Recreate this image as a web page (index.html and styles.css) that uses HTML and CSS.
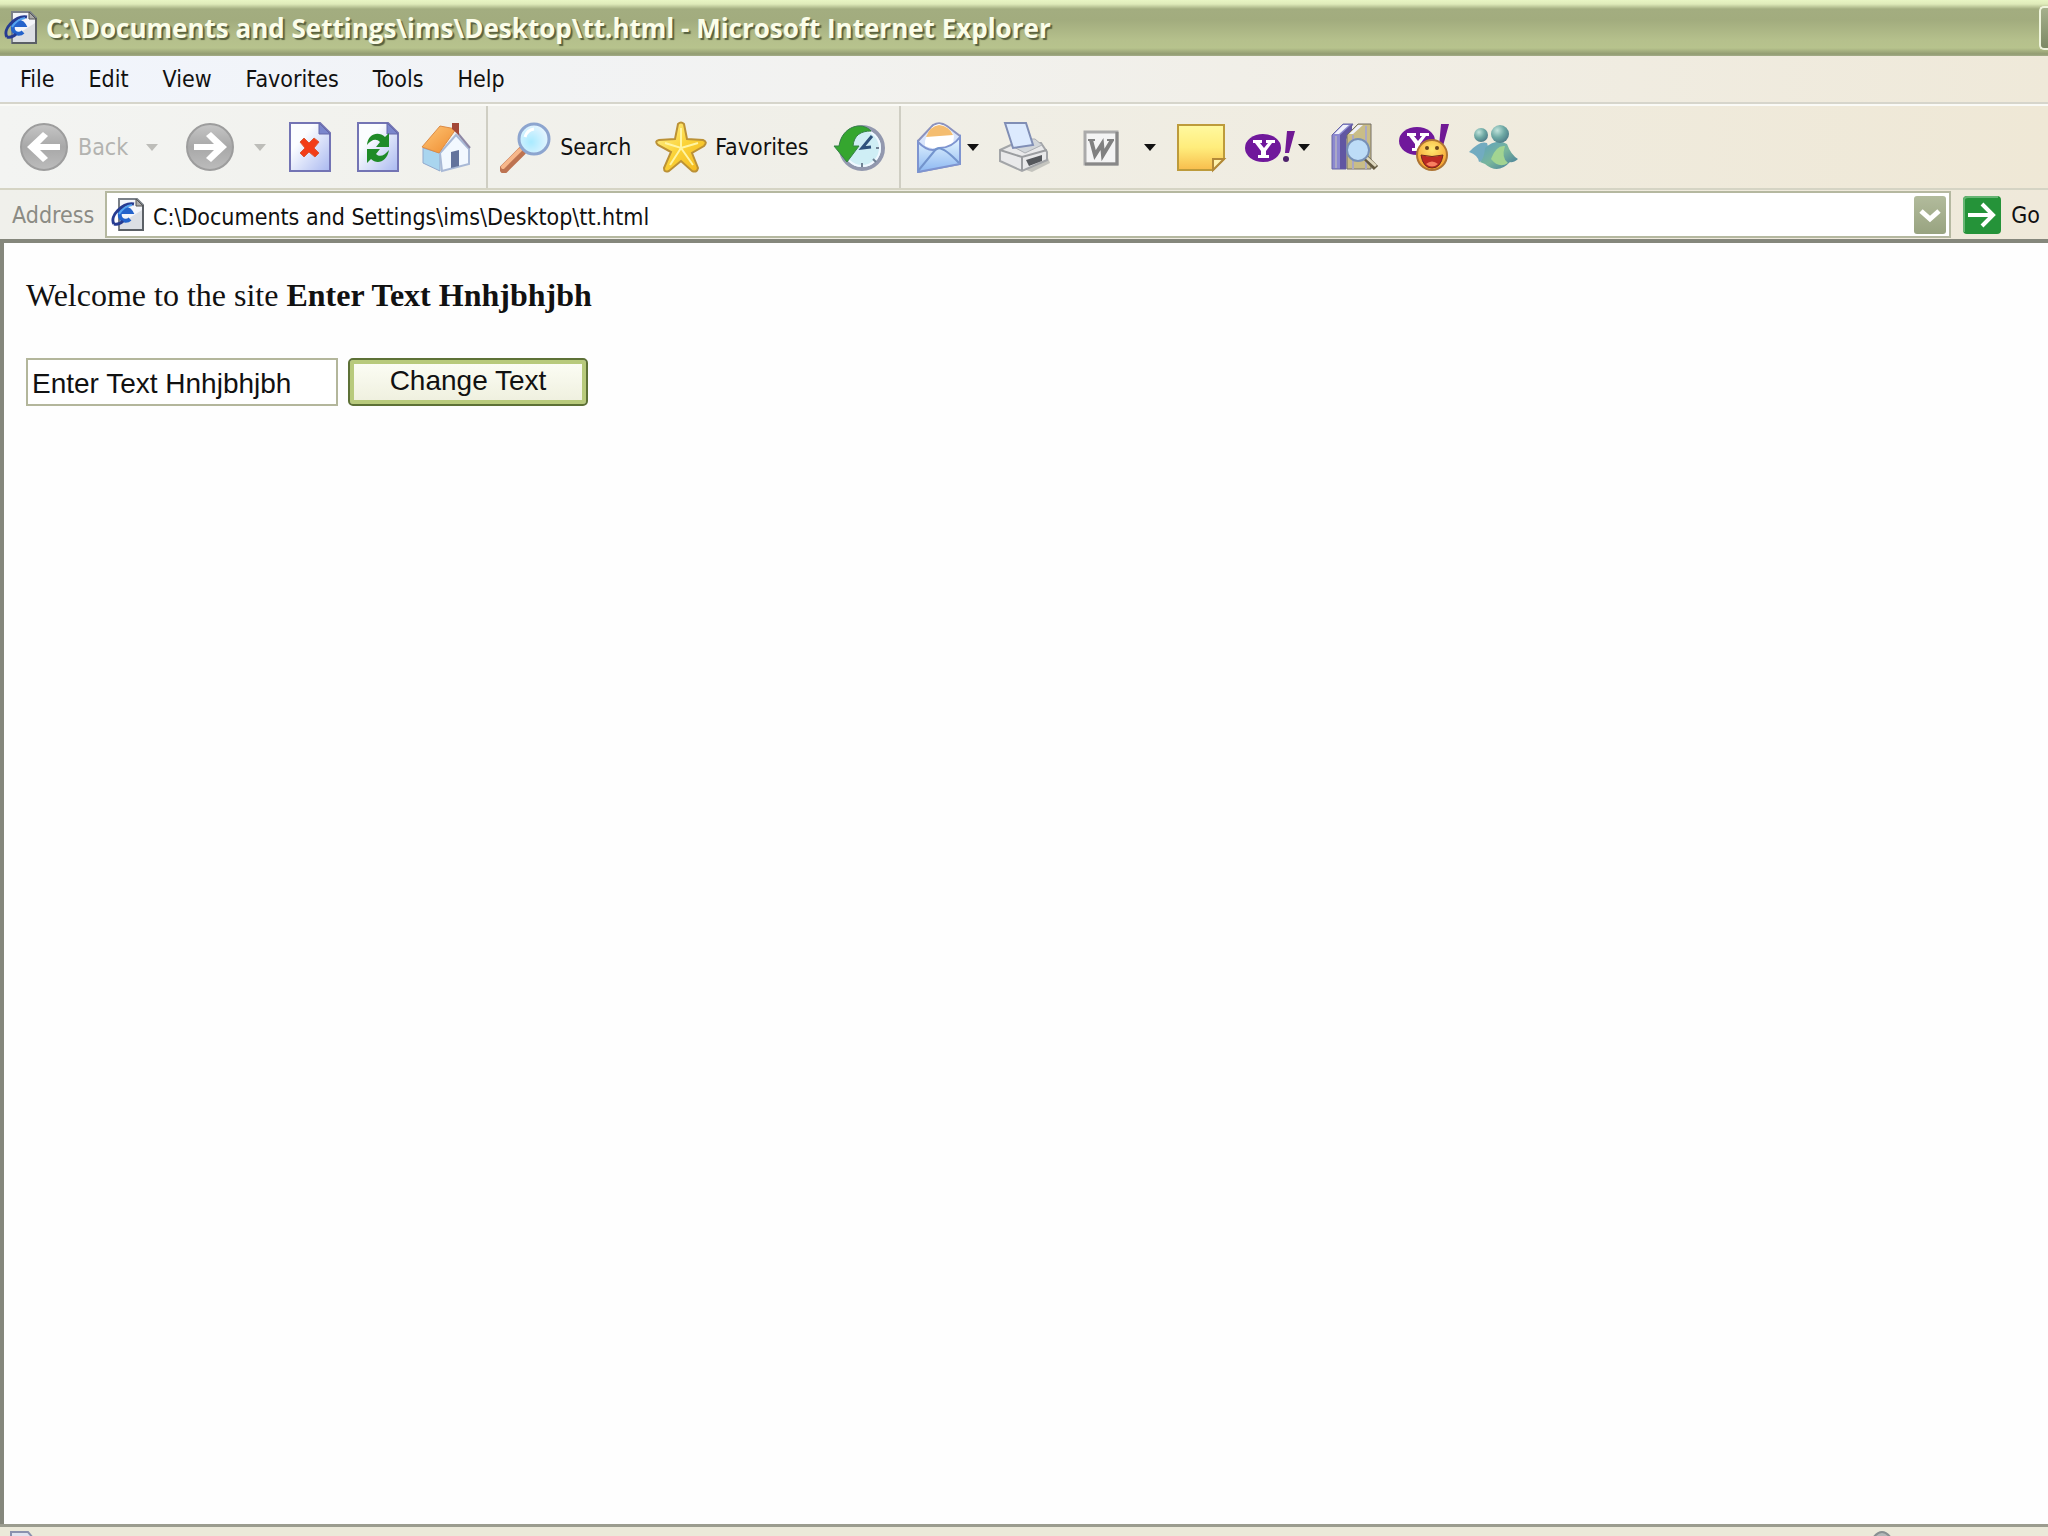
FILE: index.html
```
<!DOCTYPE html>
<html lang="en">
    <head>
        <meta charset="UTF-8" />
        <meta name="viewport" content="width=device-width, initial-scale=1.0" />
        <title>tt.html</title>
        <link rel="stylesheet" href="styles.css">
    </head>
    <body>
        <!-- gradients and shapes used by more than one icon -->
        <svg class="defs" aria-hidden="true">
            <defs>
                <linearGradient id="paper" x1="0" y1="0" x2="1" y2="1">
                    <stop offset="0.3" stop-color="#fbfdff" />
                    <stop offset="1" stop-color="#a9b8f0" />
                </linearGradient>
                <linearGradient id="gray" x1="0" y1="0" x2="0" y2="1">
                    <stop offset="0" stop-color="#c6c6c6" />
                    <stop offset="0.5" stop-color="#a8a8a8" />
                    <stop offset="1" stop-color="#bcbcbc" />
                </linearGradient>
                <linearGradient id="note" x1="0" y1="0" x2="0" y2="1">
                    <stop offset="0" stop-color="#fff9a0" />
                    <stop offset="0.5" stop-color="#ffed7c" />
                    <stop offset="1" stop-color="#f8bd4c" />
                </linearGradient>
                <linearGradient id="gold" x1="0" y1="0" x2="1" y2="1">
                    <stop offset="0" stop-color="#fff49a" />
                    <stop offset="0.5" stop-color="#fbd338" />
                    <stop offset="1" stop-color="#f3b51c" />
                </linearGradient>
                <linearGradient id="mail" x1="0" y1="0" x2="0" y2="1">
                    <stop offset="0" stop-color="#e9f8ff" />
                    <stop offset="1" stop-color="#8db8f2" />
                </linearGradient>
                <linearGradient id="roof" x1="0" y1="0" x2="1" y2="1">
                    <stop offset="0" stop-color="#ffc777" />
                    <stop offset="1" stop-color="#ee8a2e" />
                </linearGradient>
                <radialGradient id="lens" cx="0.4" cy="0.6" r="0.6">
                    <stop offset="0" stop-color="#a8eaff" />
                    <stop offset="1" stop-color="#e6f5ff" />
                </radialGradient>
                <radialGradient id="buddy" cx="0.35" cy="0.3" r="0.8">
                    <stop offset="0" stop-color="#c2e4dc" />
                    <stop offset="0.5" stop-color="#6ea9a4" />
                    <stop offset="1" stop-color="#487484" />
                </radialGradient>
                <linearGradient id="coat" x1="0" y1="0" x2="1" y2="1">
                    <stop offset="0" stop-color="#5c9fc2" />
                    <stop offset="0.5" stop-color="#79b69b" />
                    <stop offset="1" stop-color="#3f739b" />
                </linearGradient>
                <radialGradient id="smile" cx="0.5" cy="0.3" r="0.7">
                    <stop offset="0" stop-color="#ffe870" />
                    <stop offset="1" stop-color="#f59a2a" />
                </radialGradient>
            </defs>
            <symbol id="ie-page" viewBox="0 0 34 34">
                <path d="M8 1H26L32 7V32H8Z" fill="#f3f5fa" stroke="#7a8088" stroke-width="2" />
                <path d="M9 26L31 12V31H9Z" fill="#dcdfe4" />
                <path d="M32 7V32H8" fill="none" stroke="#5b6066" stroke-width="2" />
                <path d="M25 1V8H32Z" fill="#aaa" stroke="#555" />
                <path d="M19 21A6 6 0 1 1 20 14H8" fill="none" stroke="#2463cb" stroke-width="4" />
                <path d="M3 26C-2 18 12 4 23 6M3 26C7 27 10 25 12 23" fill="none" stroke="#263b91" stroke-width="3" />
                <path d="M8 16Q13 8 21 7" fill="none" stroke="#55a4ef" stroke-width="2" />
            </symbol>
            <symbol id="page" viewBox="0 0 52 52">
                <path d="M6 2H36L46 12V50H6Z" fill="url(#paper)" stroke="#7374b4" stroke-width="2" />
                <path d="M35 2V13H46Z" fill="#7b86cc" stroke="#6469aa" />
            </symbol>
            <symbol id="yahoo" viewBox="0 0 52 36">
                <ellipse cx="19" cy="20" rx="18" ry="14" fill="#70189b" />
                <path d="M9 12H18V15H16L20 20L24 15H22V12H31V15H28L22 23V27H25V30H14V27H17V23L11 15H9Z" fill="#fff" />
                <path d="M43 3H51L45 25H41Z" fill="#701994" />
                <circle cx="42" cy="31" r="3" fill="#4e216b" />
            </symbol>
        </svg>

        <header>
            <div class="title-bar">
                <svg class="page-icon" aria-hidden="true"><use href="#ie-page" /></svg>
                <h1>C:\Documents and Settings\ims\Desktop\tt.html - Microsoft Internet Explorer</h1>
                <button class="minimize" aria-label="Minimize"></button>
            </div>

            <nav class="menu-bar">
                <button>File</button>
                <button>Edit</button>
                <button>View</button>
                <button>Favorites</button>
                <button>Tools</button>
                <button>Help</button>
            </nav>

            <div class="toolbar">
                <div class="group nav-group">
                    <button class="tool" disabled>
                        <svg viewBox="0 0 52 52" aria-hidden="true">
                            <circle cx="26" cy="26" r="23" fill="url(#gray)" stroke="#9d9d9d" stroke-width="2" />
                            <path d="M9 26L25 11L30 15L22 23H42V29H22L30 37L25 41Z" fill="#fff" />
                        </svg>
                        Back
                    </button>
                    <button class="arrow" aria-label="Back list" disabled></button>
                    <button class="tool forward" aria-label="Forward" disabled>
                        <svg viewBox="0 0 52 52" aria-hidden="true">
                            <circle cx="26" cy="26" r="23" fill="url(#gray)" stroke="#9d9d9d" stroke-width="2" />
                            <path d="M43 26L27 11L22 15L30 23H10V29H30L22 37L27 41Z" fill="#fff" />
                        </svg>
                    </button>
                    <button class="arrow" aria-label="Forward list" disabled></button>
                </div>

                <div class="group">
                    <button class="tool" aria-label="Stop">
                        <svg viewBox="0 0 52 52" aria-hidden="true">
                            <use href="#page" />
                            <path d="M16 21L20 17L25 22L30 17L35 21L30 27L35 32L31 36L25 31L20 36L16 32L21 27Z" fill="#f33d17" stroke="#d95b38" />
                        </svg>
                    </button>
                    <button class="tool" aria-label="Refresh">
                        <svg viewBox="0 0 52 52" aria-hidden="true">
                            <use href="#page" />
                            <path d="M15 24C16 12 27 10 33 16L37 12V26H24L28 21C24 17 19 19 15 24Z" fill="#1f8b28" />
                            <path d="M37 29C35 41 25 44 19 38L15 42V28H28L24 33C28 37 33 34 37 29Z" fill="#1f8b28" />
                        </svg>
                    </button>
                    <button class="tool" aria-label="Home">
                        <svg viewBox="0 0 52 52" aria-hidden="true">
                            <path d="M3 27L20 32V50L3 42Z" fill="#a9d5ef" stroke="#91a9cd" />
                            <path d="M20 32L36 14L49 28V43L22 50Z" fill="#f2f8ff" stroke="#a9b9d6" stroke-width="2" />
                            <path d="M2 26L20 5L36 8L19 32Z" fill="url(#roof)" stroke="#dc8b45" />
                            <path d="M36 10L50 27" stroke="#8d87a5" stroke-width="2" />
                            <path d="M32 2H39V14L32 8Z" fill="#a34737" />
                            <path d="M31 31L39 29V45L31 47Z" fill="#63739c" />
                        </svg>
                    </button>
                </div>

                <div class="group search-group">
                    <button class="tool">
                        <svg viewBox="0 0 52 52" aria-hidden="true">
                            <path d="M4 48L22 30" stroke="#bd7351" stroke-width="9" stroke-linecap="round" />
                            <path d="M3 46L20 29" stroke="#f7b78b" stroke-width="4" stroke-linecap="round" />
                            <circle cx="34" cy="18" r="15" fill="url(#lens)" stroke="#8da5cf" stroke-width="3" />
                            <path d="M25 16Q27 9 34 8" fill="none" stroke="#fff" stroke-width="3" />
                        </svg>
                        Search
                    </button>
                    <button class="tool">
                        <svg viewBox="0 0 52 52" aria-hidden="true">
                            <path d="M23 3Q26 0 29 3L32 18L48 19Q53 21 49 25L37 32L43 47Q42 52 37 50L26 40L14 50Q9 52 9 47L16 31L3 24Q-1 20 4 19L20 18Z" fill="url(#gold)" stroke="#bb9136" stroke-width="2" />
                            <path d="M26 7V27L10 22M26 27L15 44M26 27L38 44M26 27L43 22" fill="none" stroke="#fff5a3" stroke-width="2" />
                        </svg>
                        Favorites
                    </button>
                    <button class="tool" aria-label="History">
                        <svg viewBox="0 0 52 52" aria-hidden="true">
                            <circle cx="29" cy="27" r="21" fill="#cfeef5" stroke="#9298ae" stroke-width="4" />
                            <circle cx="29" cy="27" r="18" fill="none" stroke="#f0f8ff" stroke-width="2" />
                            <path d="M29 42V46M43 27H46M40 38L43 41" stroke="#718294" stroke-width="2" />
                            <path d="M6 25C9 5 29 0 38 10C28 10 21 14 20 25H26L14 41L1 25Z" fill="#35a62f" stroke="#358047" />
                            <path d="M39 15L29 27L38 26" fill="none" stroke="#2e527c" stroke-width="3" />
                        </svg>
                    </button>
                </div>

                <div class="group extras">
                    <div class="split">
                        <button class="tool" aria-label="Mail">
                            <svg viewBox="0 0 52 52" aria-hidden="true">
                                <path d="M5 20L20 4Q27 0 34 5L47 15V43L5 51Z" fill="#d9e5fb" stroke="#8b92bd" stroke-width="2" />
                                <path d="M12 20Q16 5 26 3Q36 5 41 15L40 23Q27 31 12 25Z" fill="#fff" />
                                <path d="M13 16Q17 5 26 4Q36 5 40 14Z" fill="#f4bd70" />
                                <path d="M5 21Q17 33 26 27Q39 27 47 16V43L5 51Z" fill="url(#mail)" stroke="#7e94d0" stroke-width="2" />
                                <path d="M5 50L23 28Q29 24 46 42" fill="none" stroke="#7394cd" stroke-width="2" />
                            </svg>
                        </button>
                        <button class="arrow" aria-label="Mail menu"></button>
                    </div>
                    <button class="tool" aria-label="Print">
                        <svg viewBox="0 0 52 52" aria-hidden="true">
                            <path d="M25 48L50 37L52 42L34 51Z" fill="#c4c4be" />
                            <path d="M2 29L17 22L43 22L49 31V39L24 50L2 40Z" fill="#e9e9ea" stroke="#a3a5a8" stroke-width="2" />
                            <path d="M2 29L24 36L49 29M24 36V49" fill="none" stroke="#9b9da0" stroke-width="2" />
                            <path d="M12 24L18 18H37L44 24L27 32Z" fill="#d2d6da" stroke="#acafb4" />
                            <path d="M7 2H28L35 24L15 27Z" fill="#dceafe" stroke="#808eb5" stroke-width="2" />
                            <path d="M28 39L44 34V40L31 45Z" fill="#55585c" />
                        </svg>
                    </button>
                    <div class="split word">
                        <button class="tool" aria-label="Edit with Word">
                            <svg viewBox="0 0 52 52" aria-hidden="true">
                                <rect x="10" y="11" width="32" height="32" fill="#f4f4f4" stroke="#aaa" stroke-width="3" />
                                <path d="M10 43H42V11" fill="none" stroke="#888" stroke-width="3" />
                                <path d="M16 19L20 34L27 23L28 34L37 19" fill="none" stroke="#808080" stroke-width="4" />
                                <path d="M13 19H20M32 19H39" stroke="#808080" stroke-width="2" />
                            </svg>
                        </button>
                        <button class="arrow" aria-label="Edit menu"></button>
                    </div>
                    <button class="tool" aria-label="Discuss">
                        <svg viewBox="0 0 52 52" aria-hidden="true">
                            <path d="M3 4H49V38L38 49H3Z" fill="url(#note)" stroke="#bd9b3b" stroke-width="2" />
                            <path d="M38 49V38H49Z" fill="#fff3ad" stroke="#b28938" stroke-width="2" />
                        </svg>
                    </button>
                    <div class="split">
                        <button class="tool" aria-label="Yahoo">
                            <svg viewBox="0 0 52 52" aria-hidden="true"><use href="#yahoo" y="7" width="52" height="36" /></svg>
                        </button>
                        <button class="arrow" aria-label="Yahoo menu"></button>
                    </div>
                    <button class="tool" aria-label="Research">
                        <svg viewBox="0 0 52 52" aria-hidden="true">
                            <path d="M3 14L14 3H24L17 14V48H3Z" fill="#8c89d0" stroke="#6766a5" />
                            <path d="M11 14L23 3V12L17 18V48H11Z" fill="#6156a2" />
                            <path d="M18 14L29 3H42V48H18Z" fill="#c9bd87" stroke="#746f67" />
                            <path d="M5 13L14 4H20L10 13ZM20 13L29 4H34L24 13Z" fill="#eff1fb" />
                            <path d="M7 15V47M24 14V48M37 5V48" stroke="#aaa8c5" stroke-width="2" />
                            <path d="M36 36L47 47" stroke="#635940" stroke-width="6" />
                            <path d="M37 36L47 45" stroke="#ded8c0" stroke-width="3" />
                            <circle cx="29" cy="29" r="11" fill="#bddcf7" stroke="#7890b5" stroke-width="2" />
                        </svg>
                    </button>
                    <button class="tool" aria-label="Yahoo Messenger">
                        <svg viewBox="0 0 52 52" aria-hidden="true">
                            <use href="#yahoo" width="52" height="36" />
                            <circle cx="34" cy="34" r="15" fill="url(#smile)" stroke="#ae7534" stroke-width="2" />
                            <circle cx="29" cy="27" r="2" fill="#6b461c" />
                            <circle cx="39" cy="27" r="2" fill="#6b461c" />
                            <path d="M23 34Q34 37 45 34Q43 47 34 47Q25 47 23 34Z" fill="#bc2922" stroke="#732a1b" />
                            <path d="M28 43Q34 38 40 43Q34 48 28 43Z" fill="#f98060" />
                        </svg>
                    </button>
                    <button class="tool" aria-label="Messenger">
                        <svg viewBox="0 0 52 52" aria-hidden="true">
                            <path d="M2 31Q13 19 20 22L24 36L12 41Q11 34 2 31Z" fill="#72abc0" />
                            <circle cx="14" cy="14" r="7" fill="url(#buddy)" />
                            <path d="M13 41Q17 38 18 27Q29 17 40 23Q44 34 51 38Q46 42 43 41Q31 54 18 43Z" fill="url(#coat)" />
                            <path d="M24 38Q29 24 38 25Q34 37 41 42Q32 48 24 38Z" fill="#a2d491" />
                            <circle cx="33" cy="13" r="9" fill="url(#buddy)" />
                        </svg>
                    </button>
                </div>
            </div>

            <form class="address-bar">
                <label for="address">Address</label>
                <div class="address-field">
                    <svg class="page-icon" aria-hidden="true"><use href="#ie-page" /></svg>
                    <input id="address" type="text" value="C:\Documents and Settings\ims\Desktop\tt.html" />
                    <button class="drop" type="button" aria-label="Show addresses">
                        <svg viewBox="0 0 32 38" aria-hidden="true">
                            <path d="M7 15L16 23L25 15" fill="none" stroke="#fff" stroke-width="5" />
                        </svg>
                    </button>
                </div>
                <button class="go" type="button">
                    <svg viewBox="0 0 38 38" aria-hidden="true">
                        <rect width="38" height="38" rx="4" fill="#259339" />
                        <path d="M1 36V4Q1 1 5 1H35" fill="none" stroke="#67b574" stroke-width="2" />
                        <path d="M5 19H30M19 8L30 19L19 30" fill="none" stroke="#fff" stroke-width="4" />
                    </svg>
                    Go
                </button>
            </form>
        </header>

        <main>
            <p>Welcome to the site <b id="boldStuff">Enter Text Hnhjbhjbh</b></p>
            <form class="change-form">
                <input id="userInput" type="text" value="Enter Text Hnhjbhjbh" aria-label="Enter Text" />
                <button id="changeBtn" type="button">Change Text</button>
            </form>
        </main>

        <footer>
            <svg viewBox="0 0 24 8" aria-hidden="true">
                <path d="M1 8V2H18L23 8" fill="#dfe3ef" stroke="#8a91ae" stroke-width="2" />
            </svg>
            <svg viewBox="0 0 24 8" aria-hidden="true">
                <path d="M3 8Q12 -4 21 8" fill="#b3b8b8" stroke="#888f91" stroke-width="2" />
            </svg>
        </footer>

        <script>
            const input = document.getElementById('userInput');
            const bold = document.getElementById('boldStuff');

            document.getElementById('changeBtn').addEventListener('click', () => {
                bold.textContent = input.value;
            });
        </script>
    </body>
</html>
```
FILE: styles.css
```
* {
    margin: 0;
    padding: 0;
    box-sizing: border-box;
}
body {
    display: flex;
    flex-direction: column;
    min-height: 100vh;
    overflow: hidden;
    background: #fefefe;
    font-family: 'DejaVu Sans Condensed', 'Noto Sans', sans-serif;
    font-size: 23px;
    color: #111;
}
button {
    font: inherit;
    color: inherit;
    background: none;
    border: none;
}
svg {
    display: block;
    flex: none;
}
.defs {
    position: absolute;
    width: 0;
    height: 0;
}
.page-icon {
    width: 34px;
    height: 34px;
}

/* title bar */
.title-bar {
    display: flex;
    align-items: center;
    gap: 8px;
    height: 56px;
    padding-left: 4px;
    background: linear-gradient(
        #e8f5c4 0,
        #dfebba 4px,
        #a3ad80 9px,
        #a2ac7e 20px,
        #b5c08c 40px,
        #b7c38d 48px,
        #929c72 54px,
        #a4ac88 100%
    );
}
.title-bar h1 {
    flex: 1;
    font-family: 'Open Sans', sans-serif;
    font-size: 26px;
    font-weight: 700;
    white-space: nowrap;
    color: #fbfde9;
    text-shadow: 2px 2px 1px #59613e;
}
.minimize {
    width: 9px;
    height: 44px;
    background: linear-gradient(#a5b08c, #7d8964);
    border: 2px solid #eff5dc;
    border-right: none;
    border-radius: 5px 0 0 5px;
}

/* menu */
.menu-bar {
    display: flex;
    gap: 34px;
    height: 48px;
    padding: 0 20px;
    background: linear-gradient(90deg, #f1f5fd, #f2f2f0 40%, #efe9d9);
    border-bottom: 2px solid #d6d5cb;
}

/* icons */
.toolbar {
    display: flex;
    height: 86px;
    background: linear-gradient(90deg, #f3f4f2, #f0efe8 40%, #efe8d6);
    border-top: 2px solid #fafaf6;
    border-bottom: 2px solid #d5d4c4;
}
.group {
    display: flex;
    align-items: center;
    gap: 16px;
}
.nav-group {
    padding: 0 16px 0 18px;
}
.search-group,
.extras {
    margin-left: 14px;
    padding-left: 12px;
    border-left: 2px solid #cfcec3;
}
.search-group {
    gap: 24px;
}
.extras {
    gap: 17px;
}
.tool {
    display: flex;
    align-items: center;
    gap: 8px;
}
.tool svg {
    width: 52px;
    height: 52px;
}
.tool:disabled {
    color: #b3b3b0;
}
.forward {
    margin-left: 8px;
}
.arrow {
    display: flex;
    justify-content: center;
    width: 16px;
}
.arrow::after {
    content: '';
    border: 6px solid transparent;
    border-top: 7px solid #111;
    border-bottom: none;
}
.arrow:disabled::after {
    border-top-color: #bdbdb9;
}
.split {
    display: flex;
    align-items: center;
}
.word {
    gap: 15px;
    margin-left: 8px;
}

/* address */
.address-bar {
    display: flex;
    align-items: center;
    height: 53px;
    padding: 0 8px 0 12px;
    background: linear-gradient(90deg, #f0f0eb, #efe9da);
    border-bottom: 4px solid #85877c;
}
.address-bar label {
    width: 93px;
    color: #8b8b84;
}
.address-field {
    display: flex;
    flex: 1;
    align-items: center;
    height: 47px;
    padding: 0 3px 0 4px;
    background: #fff;
    border: 2px solid #b5b8a0;
}
.address-field input {
    flex: 1;
    min-width: 0;
    padding: 4px 0 0 8px;
    font: inherit;
    color: inherit;
    background: none;
    border: none;
}
.drop {
    width: 32px;
    height: 38px;
    background: linear-gradient(#b2bb9c, #98a380);
    border-radius: 3px;
}
.go {
    display: flex;
    align-items: center;
    gap: 10px;
    margin-left: 12px;
}
.go svg {
    width: 38px;
    height: 38px;
}

/* page */
main {
    flex: 1;
    padding: 32px 22px;
    border-left: 4px solid #85877c;
    font-family: 'Liberation Serif', serif;
    font-size: 32px;
    line-height: 40px;
}
.change-form {
    display: flex;
    gap: 10px;
    margin-top: 43px;
    font-family: 'Liberation Sans', sans-serif;
    font-size: 28px;
}
.change-form input {
    width: 312px;
    height: 48px;
    padding: 4px 4px 0;
    font: inherit;
    color: inherit;
    border: 2px solid #b3b69b;
}
.change-form button {
    width: 240px;
    height: 48px;
    padding-bottom: 2px;
    background: linear-gradient(#fdfef6, #eeefdd);
    border: 2px solid #5d7136;
    border-radius: 5px;
    box-shadow: inset 0 0 0 4px #b8ca7c;
}

/* status */
footer {
    display: flex;
    justify-content: space-between;
    height: 12px;
    padding: 3px 154px 0 10px;
    background: #ebe9d9;
    border-top: 3px solid #9b9c8f;
}
footer svg {
    width: 24px;
    height: 8px;
}
```
